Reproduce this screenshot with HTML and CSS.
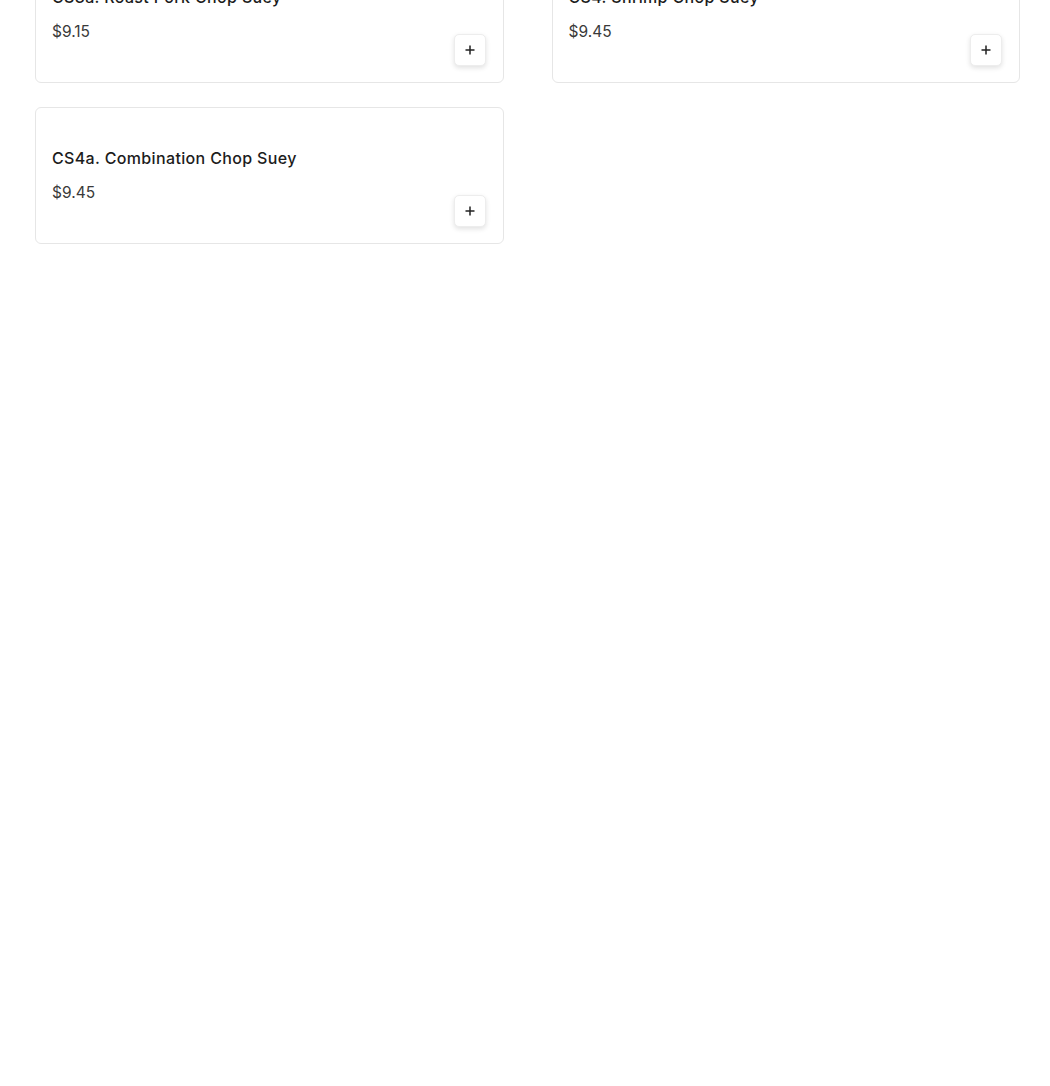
FILE: index.html
```html
<!DOCTYPE html>
<html lang="en">
<head>
<meta charset="utf-8">
<title>Chop Suey</title>
<link rel="stylesheet" href="styles.css">
</head>
<body>
<div class="menu-grid">
  <div class="item-card">
    <div class="item-spacer"></div>
    <div class="item-name">CS3a. Roast Pork Chop Suey</div>
    <div class="item-bottom">
      <div class="item-price">$9.15</div>
      <button class="add-btn" aria-label="Add"><svg width="12" height="12" viewBox="0 0 12 12"><path d="M6 1.5v9M1.5 6h9" stroke="#222" stroke-width="1.5" fill="none"/></svg></button>
    </div>
  </div>
  <div class="item-card">
    <div class="item-spacer"></div>
    <div class="item-name">CS4. Shrimp Chop Suey</div>
    <div class="item-bottom">
      <div class="item-price">$9.45</div>
      <button class="add-btn" aria-label="Add"><svg width="12" height="12" viewBox="0 0 12 12"><path d="M6 1.5v9M1.5 6h9" stroke="#222" stroke-width="1.5" fill="none"/></svg></button>
    </div>
  </div>
  <div class="item-card">
    <div class="item-spacer"></div>
    <div class="item-name">CS4a. Combination Chop Suey</div>
    <div class="item-bottom">
      <div class="item-price">$9.45</div>
      <button class="add-btn" aria-label="Add"><svg width="12" height="12" viewBox="0 0 12 12"><path d="M6 1.5v9M1.5 6h9" stroke="#222" stroke-width="1.5" fill="none"/></svg></button>
    </div>
  </div>
</div>
</body>
</html>
```
FILE: styles.css
```css
html, body {
  margin: 0;
  padding: 0;
  background: #fff;
}
body {
  font-family: Inter, "Noto Sans", "Liberation Sans", sans-serif;
  color: #1f1f1f;
}
.menu-grid {
  display: grid;
  grid-template-columns: 1fr 1fr;
  column-gap: 48px;
  row-gap: 24px;
  width: 985px;
  margin: -54px 0 0 35px;
}
.item-card {
  box-sizing: border-box;
  border: 1px solid #e6e6e6;
  border-radius: 6px;
  padding: 16px 17px 16px 16px;
  display: flex;
  flex-direction: column;
  background: #fff;
}
.item-spacer {
  height: 22px;
  flex: none;
}
.item-name {
  font-size: 16px;
  font-weight: 500;
  line-height: 24px;
  color: #1c1c1c;
  letter-spacing: 0.35px;
}
.item-bottom {
  margin-top: 11px;
  display: flex;
  justify-content: space-between;
  align-items: flex-start;
}
.item-price {
  font-size: 15.5px;
  line-height: 24px;
  color: #3a3a3a;
}
.add-btn {
  margin-top: 14px;
  width: 32px;
  height: 32px;
  padding: 0;
  display: flex;
  align-items: center;
  justify-content: center;
  background: #fff;
  border: 1px solid #ededed;
  border-radius: 5px;
  box-shadow: 0 2px 5px rgba(0, 0, 0, 0.12);
  cursor: pointer;
}
```
